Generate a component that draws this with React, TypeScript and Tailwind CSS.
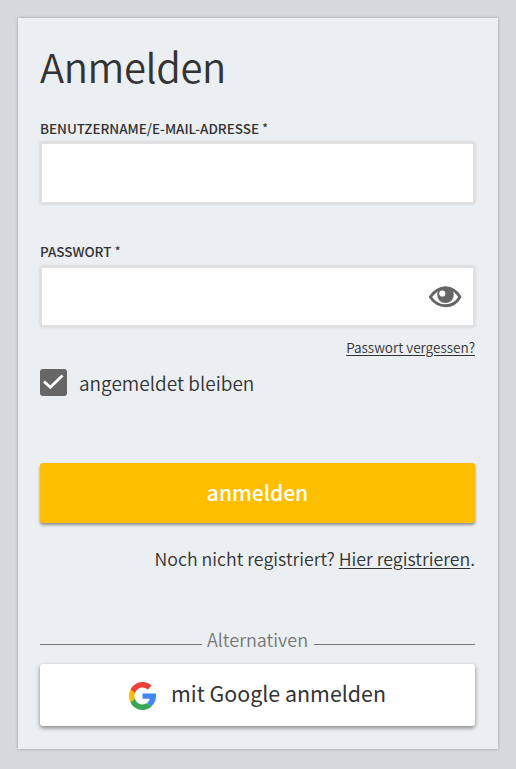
import { useState } from "react";
import type { ReactNode } from "react";

function EyeIcon() {
  return (
    <svg width="34" height="22" viewBox="0 0 34 22">
      <path
        d="M2.300 11C6.500 5 11.500 2 17.500 2S28.500 5 32 11C28.500 17 23.500 19.800 17.500 19.800S6.500 17 2.300 11Z"
        fill="none"
        stroke="#666"
        strokeWidth="2.900"
        strokeLinejoin="round"
      />
      <circle cx="17.500" cy="8.800" r="8.300" fill="#666" />
      <circle cx="14.300" cy="7.500" r="3.100" fill="#fff" />
    </svg>
  );
}

function GoogleLogo() {
  return (
    <svg className="mt-px" width="27" height="28" viewBox="0 0 48 48" preserveAspectRatio="none">
      <path fill="#EA4335" d="M24 9.500c3.540 0 6.710 1.220 9.210 3.600l6.850-6.850C35.900 2.380 30.470 0 24 0 14.620 0 6.510 5.380 2.560 13.220l7.980 6.190C12.430 13.720 17.740 9.500 24 9.500z" />
      <path fill="#4285F4" d="M48 19.700H24v9.020h12.940c-.58 2.960-2.260 5.480-4.780 7.180l7.730 6C44.400 37.700 48 32 48 24.550z" />
      <path fill="#FBBC05" d="M10.530 28.590c-.48-1.450-.76-2.990-.76-4.590s.27-3.140.76-4.590l-7.980-6.190C.92 16.460 0 20.120 0 24c0 3.880.92 7.540 2.560 10.780l7.970-6.190z" />
      <path fill="#34A853" d="M24 48c6.480 0 11.930-2.130 15.890-5.810l-7.730-6c-2.150 1.450-4.920 2.300-8.160 2.300-6.260 0-11.570-4.220-13.470-9.910l-7.980 6.190C6.510 42.620 14.620 48 24 48z" />
    </svg>
  );
}

function Field({ label, type, children, className }: { label: string; type: string; children?: ReactNode; className: string }) {
  return (
    <label className="block">
      <span className="block text-[13.5px] leading-[14px] font-medium tracking-[-0.03px] whitespace-nowrap">
        {label} <span className="font-[350]">*</span>
      </span>
      <span className={`flex items-center rounded-[2px] border-2 border-[#e0e0e0] bg-white pr-[11px] shadow-[0_0_3px_rgba(0,0,0,0.15)] ${className}`}>
        <input type={type} className="h-full min-w-0 flex-1 bg-transparent px-3 text-lg outline-none" />
        {children}
      </span>
    </label>
  );
}

export default function App() {
  const [stay, setStay] = useState(true);
  return (
    <div className="h-[769px] w-[516px] bg-[#d5d9de] px-[18px] pt-[18px] font-['Noto_Sans_CJK_SC',sans-serif] text-[#333]">
      <main className="h-[731px] bg-[#ebeff2] pr-[23px] pl-[22px] pt-[28px] shadow-[0_0_3px_rgba(0,0,0,0.3)]">
        <h1 className="h-[75px] text-[40px] leading-[40px] font-[350] tracking-[-0.4px]">Anmelden</h1>
        <Field label="BENUTZERNAME/E-MAIL-ADRESSE" type="text" className="mt-[7px] h-[62px]" />
        <div className="h-[40px]" />
        <Field label="PASSWORT" type="password" className="mt-2 h-[61px]">
          <button type="button" aria-label="Passwort anzeigen"><EyeIcon /></button>
        </Field>
        <div className="mt-[12px] flex h-4 justify-end text-[13.6px] leading-4 font-[350]">
          <a href="#" className="underline underline-offset-2">Passwort vergessen?</a>
        </div>
        <button type="button" role="checkbox" aria-checked={stay} onClick={() => setStay(!stay)} className="mt-[14px] flex h-[27px] items-center gap-[12px] text-[19px] leading-[25px] font-[350]">
          <span className="flex size-[27px] items-center justify-center rounded-[3px] bg-[#666]">
            {stay && (
              <svg width="27" height="27" viewBox="0 0 27 27" fill="none" stroke="#fff" strokeWidth="2.700">
                <path d="M4 12.500 10.300 18.300 22.500 6.500" />
              </svg>
            )}
          </span>
          <span>angemeldet bleiben</span>
        </button>
        <button type="button" className="mt-[67px] flex h-[60px] w-full items-center justify-center rounded-[3px] bg-[#ffbf00] pb-[2px] text-[21px] leading-[30px] font-medium text-white shadow-[0_2px_3px_rgba(0,0,0,0.4)]">
          anmelden
        </button>
        <p className="mt-[23px] h-6 text-right text-[17.75px] leading-6 font-[350] whitespace-nowrap">
          Noch nicht registriert? <a href="#" className="underline underline-offset-2">Hier registrieren</a>.
        </p>
        <div className="mt-[57px] flex h-6 items-center gap-[5.5px] text-[18px] leading-6 font-[350] text-[#777]">
          <span className="mt-[10px] h-px flex-1 bg-[#777]" />
          Alternativen
          <span className="mt-[10px] h-px flex-1 bg-[#777]" />
        </div>
        <button type="button" className="mt-[13px] flex h-[62px] w-full items-center justify-center gap-[15px] rounded-[3px] bg-white text-[21.400px] leading-[30px] shadow-[0_2px_4px_rgba(0,0,0,0.45)]">
          <GoogleLogo />
          <span className="pb-[5px]">mit Google anmelden</span>
        </button>
      </main>
    </div>
  );
}
